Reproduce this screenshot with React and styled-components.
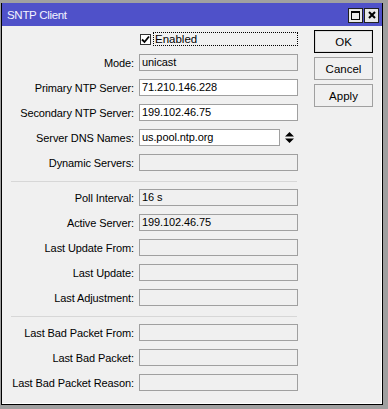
import styled, { createGlobalStyle } from 'styled-components';

const GlobalStyle = createGlobalStyle`
  body {
    margin: 0;
    background: #a0a0a0;
    font-family: "Liberation Sans", Arial, sans-serif;
  }
`;

const Window = styled.div`
  margin: 3px 0 0 1px;
  width: 382px;
  height: 402px;
  box-sizing: border-box;
  border: 1px solid #000;
  border-top: none;
  background: #f0f0f0;
  box-shadow: inset -1px -1px 0 #fff;
  display: flex;
  flex-direction: column;
`;

const TitleBar = styled.div`
  height: 23px;
  flex: none;
  background: #4f51c9;
  display: flex;
  align-items: center;
  justify-content: space-between;
  padding: 0 3px 0 5px;
`;

const Title = styled.span`
  color: #f4f4ff;
  font-size: 11.5px;
  letter-spacing: -0.3px;
`;

const TitleButtons = styled.div`
  display: flex;
  gap: 1px;
  margin-top: 1px;
`;

const TitleBtn = styled.div`
  width: 15px;
  height: 15px;
  box-sizing: border-box;
  background: #e8e8e8;
  border: 1px solid #202020;
  display: flex;
  align-items: center;
  justify-content: center;
`;

const Content = styled.div`
  display: flex;
  padding-top: 6px;
`;

const Form = styled.div`
  display: flex;
  flex-direction: column;
  gap: 8px;
`;

const Row = styled.div`
  display: grid;
  grid-template-columns: 132px 159px;
  column-gap: 5px;
  align-items: center;
  height: 17px;
`;

const Label = styled.span`
  text-align: right;
  font-size: 11px;
  letter-spacing: -0.1px;
  color: #000;
  white-space: nowrap;
`;

const Field = styled.div`
  height: 17px;
  box-sizing: border-box;
  border: 1px solid #a0a0a0;
  background: ${({ $editable }) => ($editable ? '#fff' : '#f0f0f0')};
  font-size: 11px;
  letter-spacing: -0.1px;
  color: #000;
  padding: 0 2px;
  line-height: 15px;
  width: ${({ $w }) => ($w ? `${$w}px` : 'auto')};
`;

const FieldWrap = styled.div`
  display: flex;
  align-items: center;
`;

const Spinner = styled.svg`
  margin-left: 5px;
`;

const Separator = styled.div`
  height: 1px;
  background: #d7d7d7;
  margin: 2px 0 -1px 9px;
  width: 286px;
`;

const CheckRow = styled.label`
  display: flex;
  align-items: center;
  gap: 2px;
  height: 14px;
  margin-left: 138px;
`;

const CheckBox = styled.span`
  width: 11px;
  height: 11px;
  box-sizing: border-box;
  border: 1px solid #333;
  background: #fff;
  display: flex;
  align-items: center;
  justify-content: center;
`;

const Focus = styled.span`
  width: 145px;
  height: 14px;
  box-sizing: border-box;
  outline: 1px dotted #000;
  outline-offset: -1px;
  font-size: 11.5px;
  line-height: 14px;
  padding-left: 2px;
  color: #000;
`;

const Buttons = styled.div`
  display: flex;
  flex-direction: column;
  gap: 4px;
  margin-left: 16px;
  margin-top: -2px;
`;

const Button = styled.button`
  width: 59px;
  height: 23px;
  box-sizing: border-box;
  background: #f0f0f0;
  border: 1px solid ${({ $default }) => ($default ? '#000' : '#a0a0a0')};
  box-shadow: ${({ $default }) => ($default ? 'inset 0 0 0 1px #dcdcdc' : 'none')};
  font-family: inherit;
  font-size: 11.5px;
  color: #000;
  padding: 0;
`;

const topRows = [
  { label: 'Mode:', value: 'unicast' },
  { label: 'Primary NTP Server:', value: '71.210.146.228', editable: true },
  { label: 'Secondary NTP Server:', value: '199.102.46.75', editable: true },
];

const statusRows = [
  { label: 'Poll Interval:', value: '16 s' },
  { label: 'Active Server:', value: '199.102.46.75' },
  { label: 'Last Update From:' },
  { label: 'Last Update:' },
  { label: 'Last Adjustment:' },
];

const badRows = [
  { label: 'Last Bad Packet From:' },
  { label: 'Last Bad Packet:' },
  { label: 'Last Bad Packet Reason:' },
];

function FieldRow({ label, value, editable }) {
  return (
    <Row>
      <Label>{label}</Label>
      <Field $editable={editable}>{value}</Field>
    </Row>
  );
}

export default function App() {
  return (
    <>
      <GlobalStyle />
      <Window>
        <TitleBar>
          <Title>SNTP Client</Title>
          <TitleButtons>
            <TitleBtn>
              <svg width="9" height="9" viewBox="0 0 9 9">
                <rect x="0.5" y="0.5" width="8" height="8" fill="none" stroke="#000" />
                <rect x="0" y="0" width="9" height="2" fill="#000" />
              </svg>
            </TitleBtn>
            <TitleBtn>
              <svg width="8" height="8" viewBox="0 0 8 8">
                <path d="M1 1 L7 7 M7 1 L1 7" stroke="#000" strokeWidth="2" />
              </svg>
            </TitleBtn>
          </TitleButtons>
        </TitleBar>
        <Content>
          <Form>
            <CheckRow>
              <CheckBox>
                <svg width="9" height="9" viewBox="0 0 9 9">
                  <path d="M1 4.5 L3.5 7 L8 1.5" fill="none" stroke="#000" strokeWidth="1.8" />
                </svg>
              </CheckBox>
              <Focus>Enabled</Focus>
            </CheckRow>
            {topRows.map((r) => (
              <FieldRow key={r.label} {...r} />
            ))}
            <Row>
              <Label>Server DNS Names:</Label>
              <FieldWrap>
                <Field $editable $w={141}>us.pool.ntp.org</Field>
                <Spinner width="9" height="11" viewBox="0 0 9 11">
                  <path d="M4.5 0 L9 4.5 L0 4.5 Z M0 6.5 L9 6.5 L4.5 11 Z" fill="#000" />
                </Spinner>
              </FieldWrap>
            </Row>
            <FieldRow label="Dynamic Servers:" />
            <Separator />
            {statusRows.map((r) => (
              <FieldRow key={r.label} {...r} />
            ))}
            <Separator />
            {badRows.map((r) => (
              <FieldRow key={r.label} {...r} />
            ))}
          </Form>
          <Buttons>
            <Button $default>OK</Button>
            <Button>Cancel</Button>
            <Button>Apply</Button>
          </Buttons>
        </Content>
      </Window>
    </>
  );
}
